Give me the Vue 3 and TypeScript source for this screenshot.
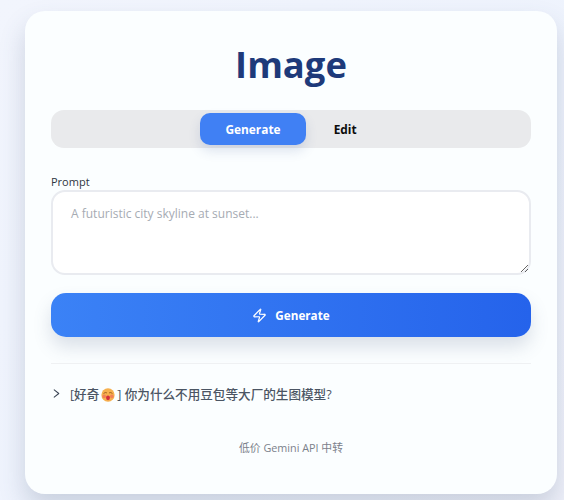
<script setup lang="ts">
import { ref } from 'vue'

const prompt = ref('')
const mode = ref<'generate' | 'edit'>('generate')
</script>

<template>
  <main class="page">
    <section class="card">
      <h1 class="title">Image</h1>

      <div class="tabs">
        <button class="tab" :class="{ active: mode === 'generate' }" type="button" @click="mode = 'generate'">Generate</button>
        <button class="tab" :class="{ active: mode === 'edit' }" type="button" @click="mode = 'edit'">Edit</button>
      </div>

      <label class="label" for="prompt">Prompt</label>
      <textarea id="prompt" v-model="prompt" class="input" placeholder="A futuristic city skyline at sunset..."></textarea>

      <button class="submit" type="button">
        <svg class="bolt" viewBox="0 0 24 24" fill="none" stroke="currentColor" stroke-width="2" stroke-linecap="round" stroke-linejoin="round" aria-hidden="true">
          <path d="M4 14a1 1 0 0 1-.78-1.63l9.9-10.2a.5.5 0 0 1 .86.46l-1.92 6.02A1 1 0 0 0 13 10h7a1 1 0 0 1 .78 1.63l-9.9 10.2a.5.5 0 0 1-.86-.46l1.92-6.02A1 1 0 0 0 11 14z" />
        </svg>
        <span>Generate</span>
      </button>

      <hr class="divider" />

      <div class="faq">
        <svg class="chevron" viewBox="0 0 24 24" fill="none" stroke="currentColor" stroke-width="2.2" stroke-linecap="round" stroke-linejoin="round" aria-hidden="true">
          <path d="m7 4 10 8-10 8" />
        </svg>
        <span class="faq-text">
          [好奇<svg class="emoji" viewBox="0 0 20 20" aria-hidden="true">
            <circle cx="10" cy="10" r="9.5" fill="#f6b04e" />
            <path d="M4 7.5q2-2 4-.8M12 6.7q2-1.2 4 .8" fill="none" stroke="#9a5a1e" stroke-width="1.3" stroke-linecap="round" />
            <circle cx="4.5" cy="12" r="2.6" fill="#f0705a" opacity=".75" />
            <circle cx="15.5" cy="12" r="2.6" fill="#f0705a" opacity=".75" />
            <ellipse cx="10" cy="14" rx="2.8" ry="3.4" fill="#d42c3c" />
          </svg>] 你为什么不用豆包等大厂的生图模型?
        </span>
      </div>

      <p class="footer">低价 Gemini API 中转</p>
    </section>
  </main>
</template>

<style>
html,
body {
  margin: 0;
  background: #eff3fd;
}
</style>

<style scoped>
.page {
  box-sizing: border-box;
  height: 500px;
  overflow: hidden;
  padding: 11px 7px 0 25px;
  background: linear-gradient(135deg, #f2f5fd 0%, #eef3fd 60%, #f0f2fb 100%);
  font-family: "Open Sans", "Noto Sans CJK SC", sans-serif;
}

.card {
  box-sizing: border-box;
  width: 532px;
  height: 483px;
  padding: 26px 26px 0;
  border-radius: 20px;
  background: #fbfeff;
  box-shadow: 0 14px 26px rgba(70, 85, 120, 0.22);
}

.title {
  margin: 0;
  height: 54px;
  color: #1e3a7a;
  font-size: 36.4px;
  font-weight: 700;
  line-height: 54px;
  text-align: center;
}

.tabs {
  display: flex;
  justify-content: center;
  gap: 3px;
  box-sizing: border-box;
  height: 38px;
  margin-top: 19px;
  padding: 3px;
  border-radius: 13px;
  background: #e9eaec;
}

.tab {
  height: 32px;
  padding: 0 25px;
  border: 0;
  border-radius: 10px;
  background: transparent;
  color: #0c0c0c;
  font: 700 11.9px "Open Sans", sans-serif;
}

.tab.active {
  background: #4080f4;
  color: #fff;
  box-shadow: 0 6px 12px rgba(60, 90, 150, 0.16);
}

.label {
  display: block;
  margin-top: 26px;
  color: #2f3642;
  font-size: 11px;
  font-weight: 500;
  line-height: 15px;
}

.input {
  display: block;
  box-sizing: border-box;
  width: 480px;
  height: 85px;
  margin: 1px 0 0;
  padding: 12px 18px;
  border: 2px solid #e9ebf0;
  border-radius: 14px;
  outline: 0;
  background: #fff;
  color: #1f2937;
  font: 400 12px/20px "Open Sans", sans-serif;
}

.input::placeholder {
  color: #a6abb3;
}

.submit {
  display: flex;
  align-items: center;
  justify-content: center;
  gap: 8px;
  width: 480px;
  height: 44px;
  margin-top: 18px;
  border: 0;
  border-radius: 15px;
  background: linear-gradient(90deg, #3b82f6, #2563eb);
  color: #fff;
  font: 700 11.7px "Open Sans", sans-serif;
  box-shadow: 0 10px 18px rgba(70, 90, 130, 0.18);
}

.bolt {
  width: 15px;
  height: 15px;
}

.divider {
  height: 1px;
  margin: 26px 0 0;
  border: 0;
  background: #eff1f3;
}

.faq {
  display: flex;
  align-items: center;
  gap: 8px;
  height: 18px;
  margin-top: 20px;
  color: #4b5563;
  font-size: 12.6px;
  font-weight: 500;
}

.chevron {
  flex: none;
  width: 11px;
  height: 11px;
  color: #374151;
}

.faq-text {
  white-space: nowrap;
}

.emoji {
  width: 14px;
  height: 14px;
  margin: 0 2px;
  vertical-align: -3px;
}

.footer {
  margin: 38px 0 0;
  color: #7b818b;
  font-size: 10.8px;
  line-height: 16px;
  text-align: center;
}
</style>
